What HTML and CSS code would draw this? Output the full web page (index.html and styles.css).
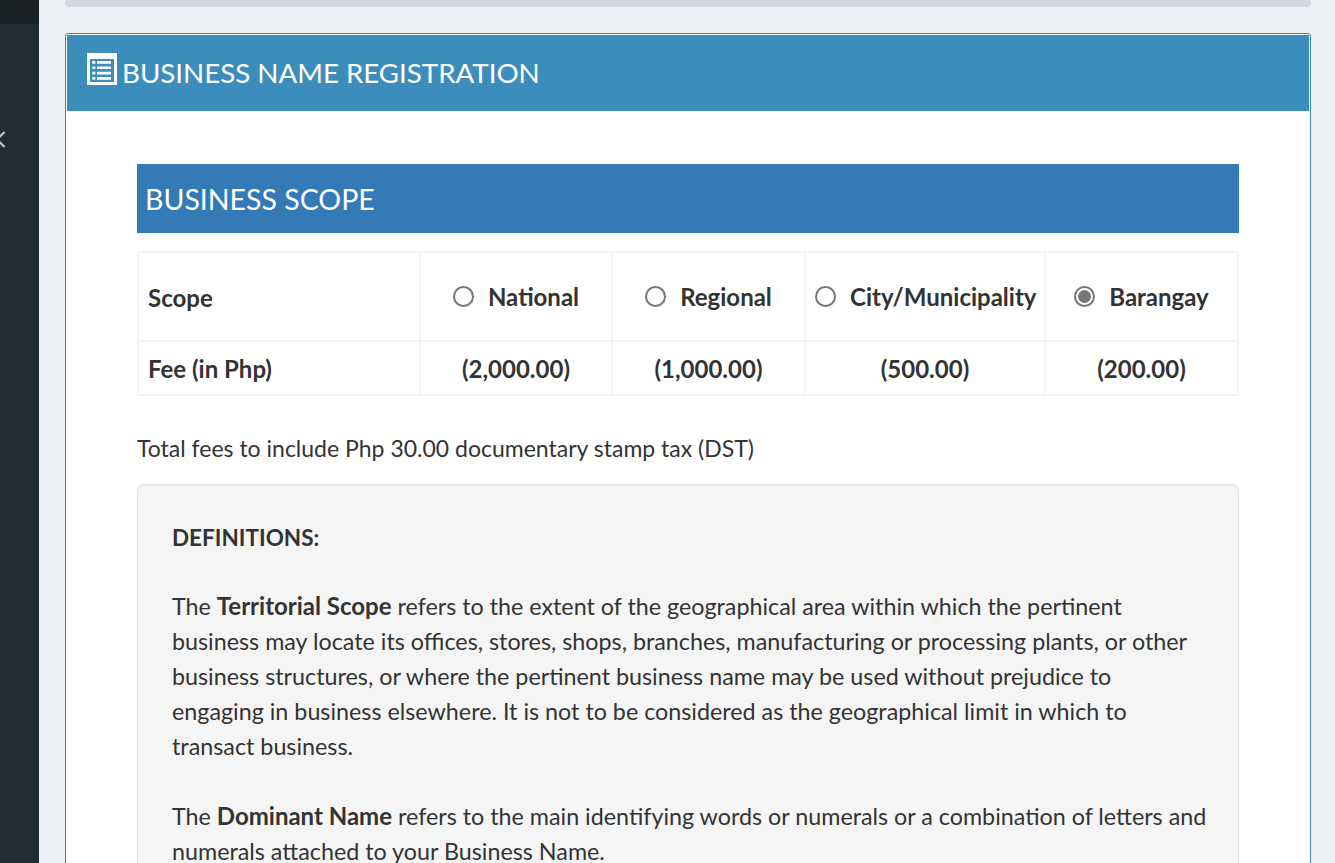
FILE: index.html
```html
<!DOCTYPE html>
<html lang="en">
<head>
  <meta charset="UTF-8" />
  <title>Business Name Registration</title>
  <link rel="stylesheet" href="styles.css">
</head>
<body>

  <aside class="sidebar">
    <div class="sidebar-top"></div>
    <svg class="sidebar-chevron" width="6" height="17" viewBox="0 0 6 17">
      <path d="M4.5 1 L-3 8.5 L4.5 16" fill="none" stroke="#b8c7ce" stroke-width="2.2"/>
    </svg>
  </aside>

  <main class="content">
    <div class="top-strip"></div>

    <section class="panel">
      <header class="panel-heading">
        <svg class="list-icon" width="30" height="32" viewBox="0 0 30 32">
          <path fill="#fff" fill-rule="evenodd" d="M0 0H30V32H0ZM3 6V29H27V6Z"/>
          <path fill="#fff" d="M5.3 8h3v2.7h-3zM10 8h14v2.7H10zM5.3 13.4h3v2.7h-3zM10 13.4h14v2.7H10zM5.3 18.7h3v2.7h-3zM10 18.7h14v2.7H10zM5.3 24h3v2.7h-3zM10 24h14v2.7H10z"/>
        </svg>
        <h1>BUSINESS NAME REGISTRATION</h1>
      </header>

      <div class="panel-body">
        <h2 class="section-title">BUSINESS SCOPE</h2>

        <table class="scope-table">
          <tr class="scope-row">
            <td class="label-cell">Scope</td>
            <td><span class="option"><span class="radio"></span>National</span></td>
            <td><span class="option"><span class="radio"></span>Regional</span></td>
            <td><span class="option"><span class="radio"></span>City/Municipality</span></td>
            <td><span class="option"><span class="radio checked"></span>Barangay</span></td>
          </tr>
          <tr class="fee-row">
            <td class="label-cell">Fee (in Php)</td>
            <td>(2,000.00)</td>
            <td>(1,000.00)</td>
            <td>(500.00)</td>
            <td>(200.00)</td>
          </tr>
        </table>

        <p class="note">Total fees to include Php 30.00 documentary stamp tax (DST)</p>

        <div class="well">
          <p class="well-title"><strong>DEFINITIONS:</strong></p>
          <p>The <strong>Territorial Scope</strong> refers to the extent of the geographical area within which the pertinent<br>business may locate its offices, stores, shops, branches, manufacturing or processing plants, or other<br>business structures, or where the pertinent business name may be used without prejudice to<br>engaging in business elsewhere. It is not to be considered as the geographical limit in which to<br>transact business.</p>
          <p>The <strong>Dominant Name</strong> refers to the main identifying words or numerals or a combination of letters and<br>numerals attached to your Business Name.</p>
        </div>
      </div>
    </section>
  </main>

</body>
</html>
```

FILE: styles.css
```css
html, body {
  height: 863px;
  overflow: hidden;
}

body {
  display: flex;
  margin: 0;
  background: #ecf0f5;
  color: #333;
  font-family: "Lato", "Noto Sans", sans-serif;
  font-size: 23px;
  line-height: 35px;
}

.sidebar {
  position: relative;
  flex: 0 0 39px;
  background: #222d32;
}

.sidebar-top {
  height: 24px;
  background: #1a2226;
}

.sidebar-chevron {
  position: absolute;
  left: 0;
  top: 131px;
}

.content {
  flex: 1;
  min-width: 0;
  padding: 0 24px 0 26px;
}

.top-strip {
  height: 7px;
  background: #d2d6de;
  border-radius: 0 0 4px 4px;
}

.panel {
  margin-top: 26px;
  padding: 1px;
  border: 1px solid #3c85bc;
  border-radius: 3px;
  background: #fff;
}

.panel-heading {
  display: flex;
  align-items: center;
  gap: 6px;
  height: 76px;
  padding-left: 20px;
  background: #3c8dbc;
  color: #fff;
}

.list-icon {
  margin-top: -8px;
}

.panel-heading h1 {
  margin: -2px 0 0 -1px;
  font-size: 27.7px;
  font-weight: 400;
}

.panel-body {
  padding: 53px 70px 0;
}

.section-title {
  margin: 0;
  padding: 1px 8px 0;
  background: #337ab7;
  color: #fff;
  font-size: 28.5px;
  font-weight: 400;
  line-height: 68px;
}

.scope-table {
  width: 100%;
  margin-top: 18px;
  border-collapse: collapse;
  table-layout: fixed;
  border: 2px solid #f4f4f4;
  font-size: 24px;
  font-weight: 700;
}

.scope-table td {
  box-sizing: border-box;
  border: 2px solid #f4f4f4;
  padding: 0 9px;
  text-align: center;
  white-space: nowrap;
}

.scope-table td:nth-child(1) { width: 282px; }
.scope-table td:nth-child(2) { width: 192px; }
.scope-table td:nth-child(3) { width: 193px; }
.scope-table td:nth-child(4) { width: 240px; }

.scope-table .label-cell {
  text-align: left;
}

.scope-row {
  height: 89px;
}

.scope-row td {
  padding-top: 1px;
}

.fee-row {
  height: 54px;
}

.fee-row td {
  padding-top: 1px;
}

.option {
  display: inline-flex;
  align-items: center;
  gap: 14px;
}

.radio {
  box-sizing: border-box;
  width: 21px;
  height: 21px;
  border: 2px solid #767676;
  border-radius: 50%;
  background: #fff;
}

.radio.checked {
  padding: 2px;
  background: #767676 content-box;
}

.note {
  margin: 35px 0 18px;
}

.well {
  padding: 35px 34px;
  background: #f5f5f5;
  border: 1px solid #e3e3e3;
  border-radius: 6px;
  box-shadow: inset 0 1px 1px rgba(0, 0, 0, 0.05);
  font-size: 23.3px;
  white-space: nowrap;
}

.well p {
  margin: 0 0 35px;
}

.well strong {
  font-size: 24px;
  line-height: 0;
}

.well .well-title {
  margin-bottom: 34px;
}

.well-title strong {
  font-size: 22.5px;
}
```
